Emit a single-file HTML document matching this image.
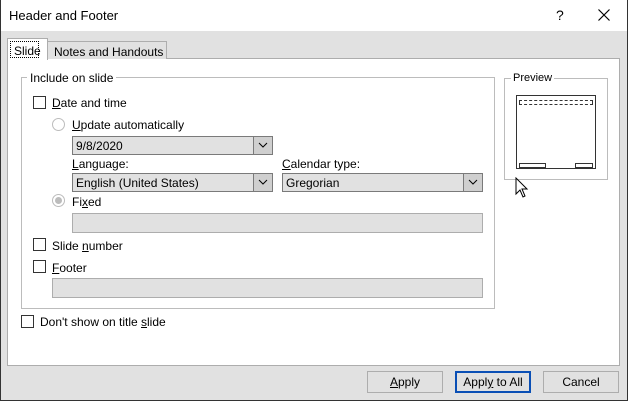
<!DOCTYPE html>
<html><head><style>
*{margin:0;padding:0;box-sizing:border-box}
body{width:628px;height:401px;overflow:hidden;background:#e1e1e1;font-family:"Liberation Sans",sans-serif;font-size:12px;color:#000;position:relative}
.a{position:absolute}
.win{left:0;top:0;width:628px;height:401px;border:1px solid #333;border-top:none}
.cb{width:13px;height:13px;border:1px solid #333;background:#fff}
.rd{width:13px;height:13px;border:1px solid #bcbcbc;border-radius:50%;background:#fff}
.dd{height:19px;border:1px solid #7a7a7a;background:#e1e1e1;padding:2px 0 0 3px;font-size:12px}
.dd .b{position:absolute;right:0;top:0;width:19px;height:17px;background:#cfcfcf;border-left:1px solid #7a7a7a}
.tb{height:20px;border:1px solid #adadad;background:#e1e1e1}
.btn{height:22px;width:76px;border:1px solid #adadad;background:#e1e1e1;text-align:center;line-height:20px}
u{text-decoration:underline}
</style></head><body>
<div class="a win"></div>
<div class="a" style="left:0;top:0;width:628px;height:31px;background:#fff;border-right:1px solid #333;border-left:1px solid #333"></div>
<div class="a" style="left:9px;top:8px;font-size:13px">Header and Footer</div>
<div class="a" style="left:556px;top:7px;font-size:14px">?</div>
<svg class="a" style="left:597px;top:8px" width="14" height="14"><path d="M1.5 1.5 L12.5 12.5 M12.5 1.5 L1.5 12.5" stroke="#000" stroke-width="1.2"/></svg>

<div class="a" style="left:7px;top:58px;width:613px;height:308px;background:#fff;border:1px solid #adadad"></div>
<div class="a" style="left:47px;top:41px;width:120px;height:18px;background:#e1e1e1;border:1px solid #adadad;border-bottom:none;padding:3px 0 0 6px">Notes and Handouts</div>
<div class="a" style="left:7px;top:38px;width:41px;height:22px;background:#fff;border:1px solid #adadad;border-bottom:none"></div>
<div class="a" style="left:10px;top:41px;width:29px;height:17px;border:1px dotted #000;padding:2px 0 0 3px">Slide</div>

<div class="a" style="left:21px;top:77px;width:474px;height:232px;border:1px solid #bcbcbc"></div>
<div class="a" style="left:27px;top:71px;background:#fff;padding:0 3px">Include on slide</div>
<div class="a" style="left:504px;top:78px;width:104px;height:102px;border:1px solid #bcbcbc"></div>
<div class="a" style="left:511px;top:72px;background:#fff;padding:0 2px;font-size:11px">Preview</div>
<div class="a" style="left:516px;top:95px;width:80px;height:74px;border:1px solid #333;background:#fff"></div>
<div class="a" style="left:519px;top:100px;width:74px;height:5px;border:1px dashed #333"></div>
<div class="a" style="left:519px;top:163px;width:27px;height:5px;border:1px solid #333"></div>
<div class="a" style="left:575px;top:163px;width:18px;height:5px;border:1px solid #333"></div>
<svg class="a" style="left:515px;top:177px" width="14" height="22"><path d="M1 1 L1 17 L5 13 L8 20 L10 19 L7 12 L12 12 Z" fill="#fff" stroke="#000" stroke-width="1"/></svg>

<div class="a cb" style="left:33px;top:96px"></div>
<div class="a" style="left:52px;top:96px"><u>D</u>ate and time</div>
<div class="a rd" style="left:52px;top:118px"></div>
<div class="a" style="left:72px;top:118px"><u>U</u>pdate automatically</div>
<div class="a dd" style="left:72px;top:136px;width:201px">9/8/2020<div class="b"><svg width="18" height="17"><path d="M5 6 L9 10 L13 6" fill="none" stroke="#000"/></svg></div></div>
<div class="a" style="left:72px;top:157px"><u>L</u>anguage:</div>
<div class="a" style="left:282px;top:157px"><u>C</u>alendar type:</div>
<div class="a dd" style="left:72px;top:173px;width:201px">English (United States)<div class="b"><svg width="18" height="17"><path d="M5 6 L9 10 L13 6" fill="none" stroke="#000"/></svg></div></div>
<div class="a dd" style="left:282px;top:173px;width:201px">Gregorian<div class="b"><svg width="18" height="17"><path d="M5 6 L9 10 L13 6" fill="none" stroke="#000"/></svg></div></div>
<div class="a rd" style="left:52px;top:194px"><div style="margin:2px;width:7px;height:7px;border-radius:50%;background:#bcbcbc"></div></div>
<div class="a" style="left:72px;top:195px">Fi<u>x</u>ed</div>
<div class="a tb" style="left:72px;top:213px;width:411px"></div>
<div class="a cb" style="left:33px;top:238px"></div>
<div class="a" style="left:52px;top:239px">Slide <u>n</u>umber</div>
<div class="a cb" style="left:33px;top:260px"></div>
<div class="a" style="left:52px;top:261px"><u>F</u>ooter</div>
<div class="a tb" style="left:52px;top:278px;width:431px"></div>
<div class="a cb" style="left:21px;top:315px"></div>
<div class="a" style="left:40px;top:315px">Don't show on title <u>s</u>lide</div>

<div class="a btn" style="left:367px;top:371px"><u>A</u>pply</div>
<div class="a btn" style="left:455px;top:371px;border:2px solid #0a4fb5;line-height:18px">Appl<u>y</u> to All</div>
<div class="a btn" style="left:543px;top:371px">Cancel</div>
</body></html>
